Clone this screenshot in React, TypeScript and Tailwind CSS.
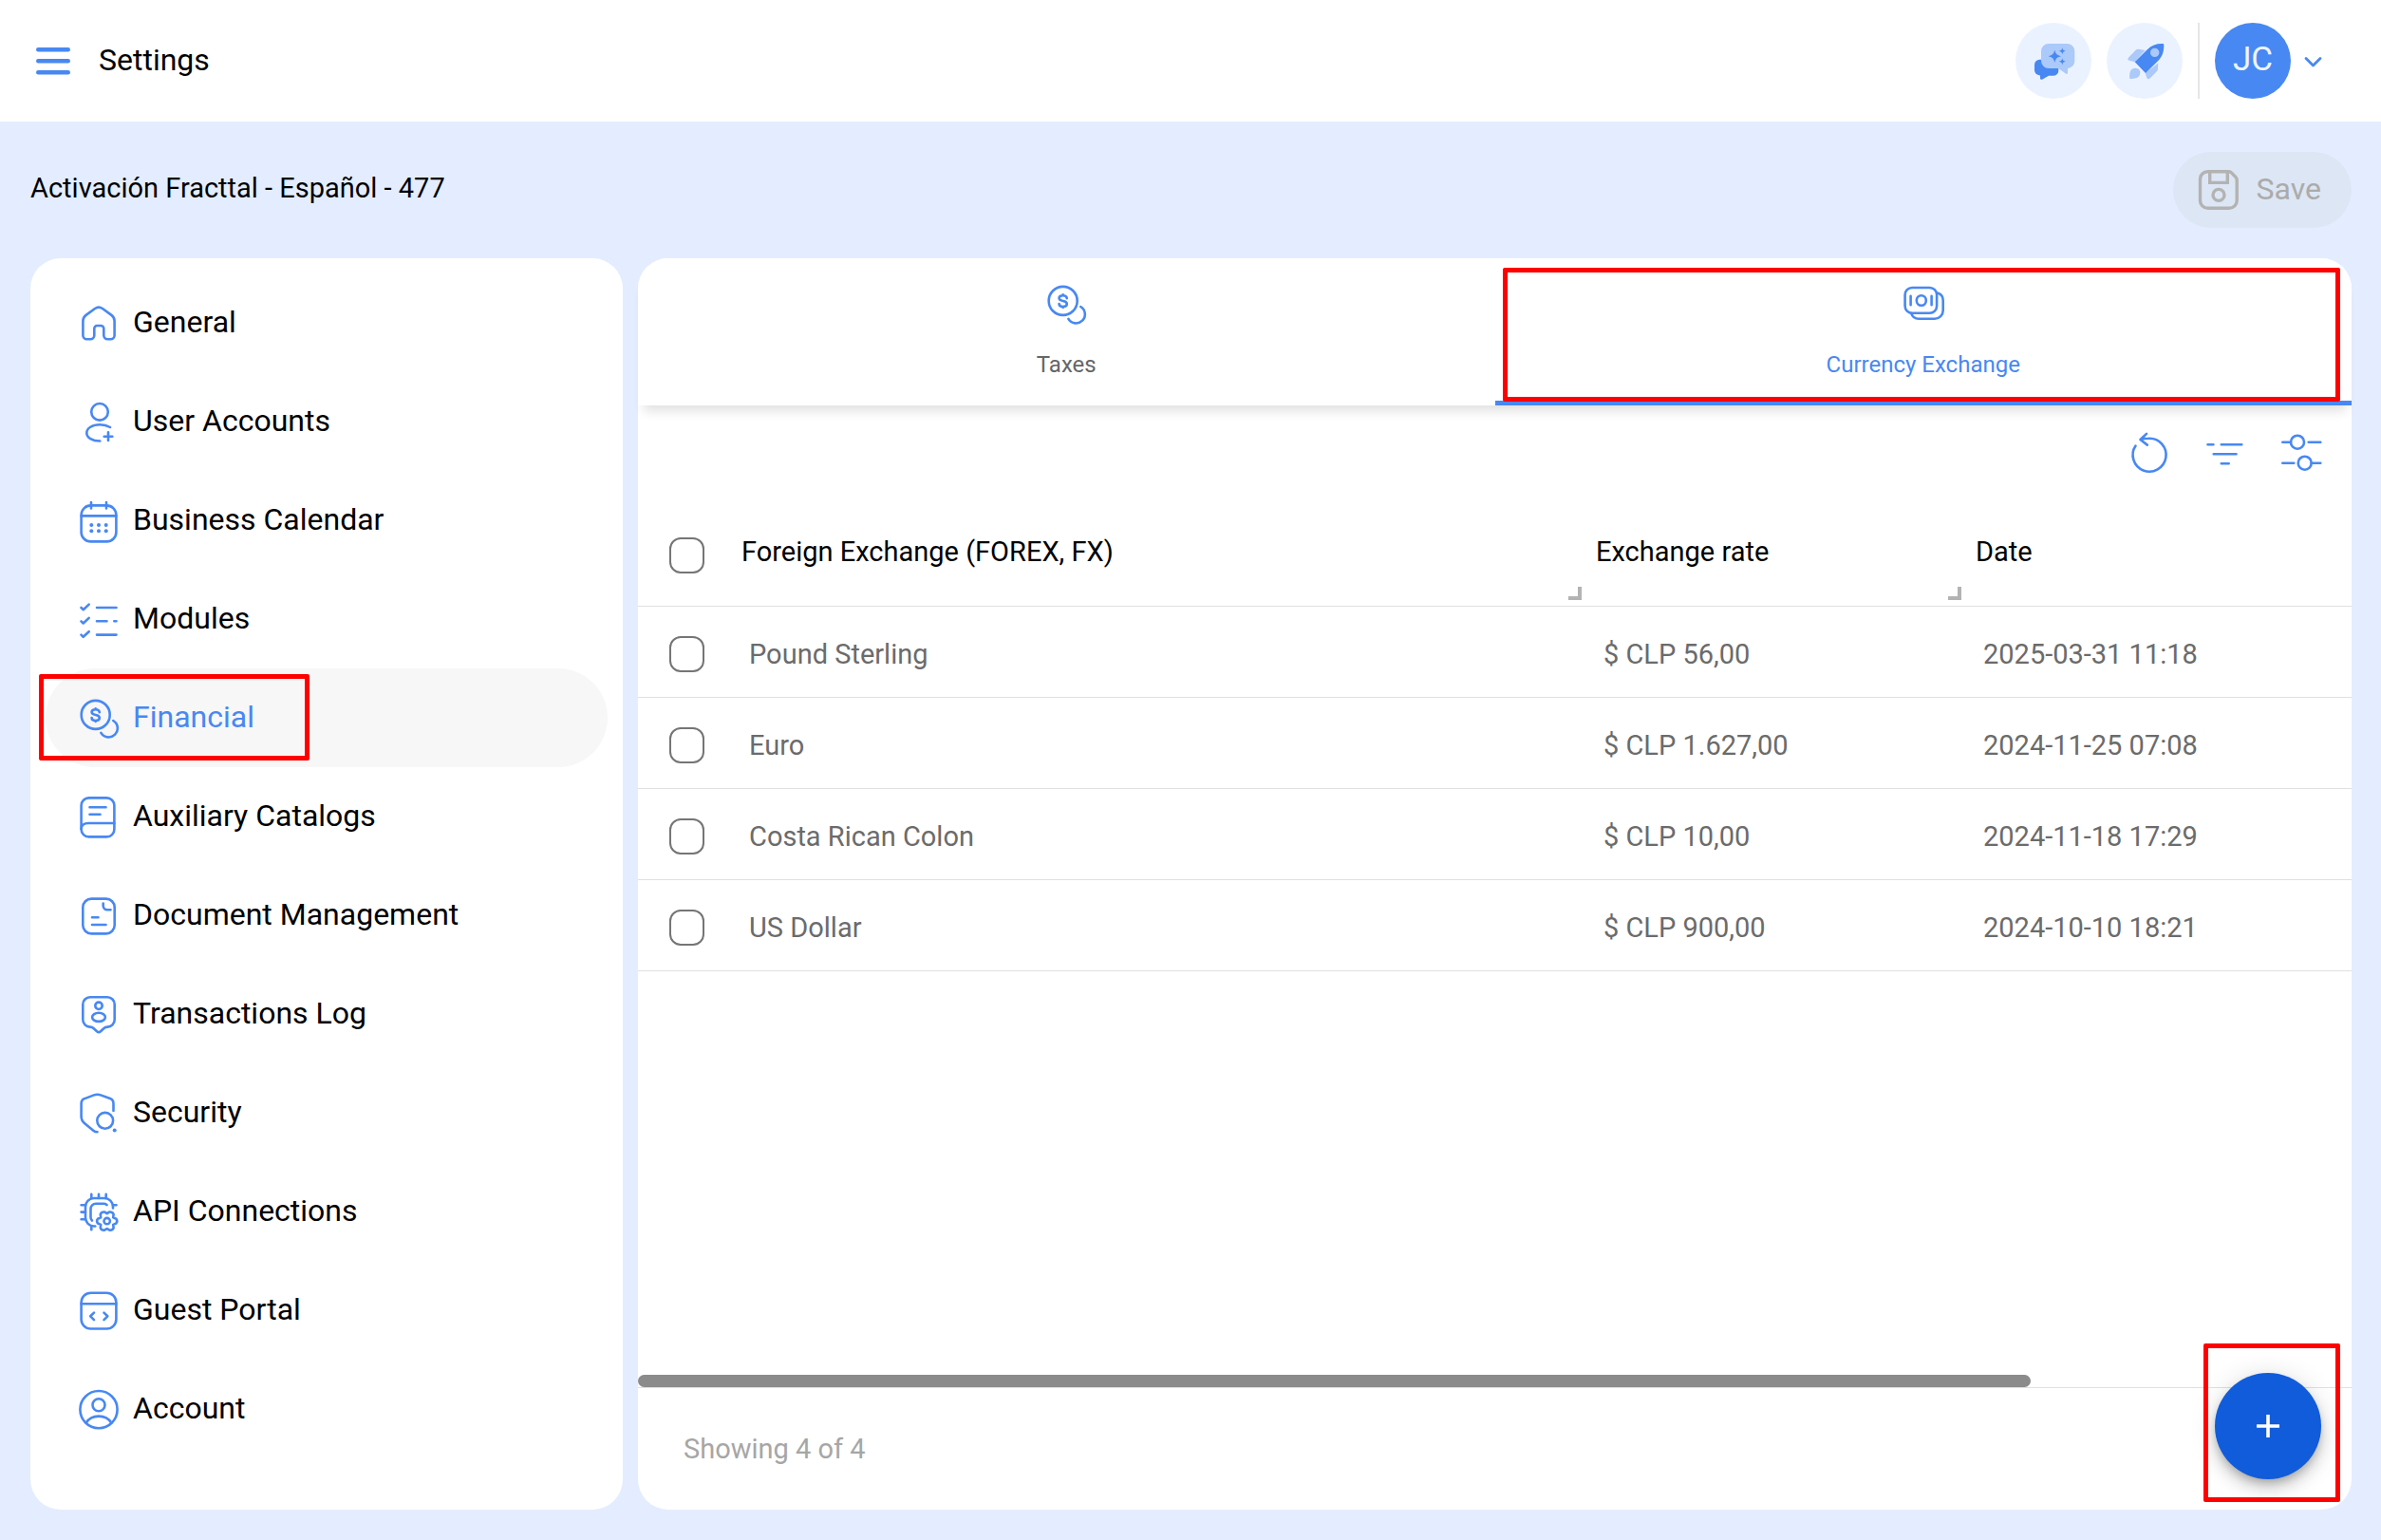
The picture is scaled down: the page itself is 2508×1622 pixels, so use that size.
import type { ReactNode } from "react";

type IconProps = { children: ReactNode; className?: string; width?: number };

function Icon({ children, className = "text-[#4888f2]", width = 2.6 }: IconProps) {
  return (
    <svg
      viewBox="0 0 48 48"
      fill="none"
      stroke="currentColor"
      strokeWidth={width}
      strokeLinecap="round"
      strokeLinejoin="round"
      aria-hidden="true"
      className={`size-12 shrink-0 ${className}`}
    >
      {children}
    </svg>
  );
}

const coins = (
  <Icon>
    <circle cx="20.7" cy="20.9" r="15" />
    <path d="M39.3 27A9.4 9.4 0 1 1 26.4 39.9" />
    <path d="M24.8 18.2c0-2-1.7-3-4.1-3s-4.1 1-4.1 2.900 1.700 2.500 4.100 2.900 4.100 1.100 4.100 3-1.700 3-4.100 3-4.100-1-4.100-3M20.700 14.200v1M20.700 27v1" />
  </Icon>
);

const menuItems = [
  {
    label: "General",
    icon: (
      <Icon>
        <path d="M7.4 22c0-3 1-4.5 3.2-6.1L20 9c2.6-1.8 5.4-1.8 8 0l9.4 6.900c2.200 1.600 3.200 3.100 3.200 6.100v15.300a4 4 0 0 1-4 4h-3.300a4 4 0 0 1-4-4V30a3 3 0 0 0-3-3h-4a3 3 0 0 0-3 3v7.300a4 4 0 0 1-4 4h-3.900a4 4 0 0 1-4-4z" />
      </Icon>
    ),
  },
  {
    label: "User Accounts",
    icon: (
      <Icon>
        <circle cx="25" cy="13.8" r="8.8" />
        <path d="M36 30c-3-1.800-6.500-2.800-10.700-2.800-8.100 0-14 3.800-14 8.800s5.900 8.500 14 8.500M34 35.400v8.600M29.700 39.700h8.600" />
      </Icon>
    ),
  },
  {
    label: "Business Calendar",
    icon: (
      <Icon>
        <rect x="5.6" y="8.4" width="36.8" height="38" rx="10" />
        <path d="M5.600 19.400h36.800M16 5v6.500M32 5v6.500" />
        <g fill="currentColor" stroke="none">
          <circle cx="16.3" cy="29" r="2" />
          <circle cx="24" cy="29" r="2" />
          <circle cx="31.7" cy="29" r="2" />
          <circle cx="16.3" cy="35.3" r="2" />
          <circle cx="24" cy="35.3" r="2" />
          <circle cx="31.7" cy="35.3" r="2" />
        </g>
      </Icon>
    ),
  },
  {
    label: "Modules",
    icon: (
      <Icon>
        <path d="M5.500 12l2.200 2.200 6-5.600M5.500 26.300l2.200 2.200 6-5.600M5.500 40.600l2.200 2.200 6-5.600" />
        <path d="M22 12h20.500M22 26.300h10.500M40.300 26.300h2.200M22 40.600h20.500" />
      </Icon>
    ),
  },
  { label: "Financial", icon: coins, active: true },
  {
    label: "Auxiliary Catalogs",
    icon: (
      <Icon>
        <rect x="5.6" y="4.4" width="34.8" height="41" rx="8" />
        <path d="M14.500 14.300h17M14.500 21.700h11M40.400 31H13c-4.500 0-7.400 2-7.400 6" />
      </Icon>
    ),
  },
  {
    label: "Document Management",
    icon: (
      <Icon>
        <rect x="7.3" y="6.6" width="33.4" height="36.8" rx="9" />
        <path d="M28.700 11.500V14a4.300 4.300 0 0 0 4.300 4.300h3.500M17 26.300h6.500M17 34h14.500" />
      </Icon>
    ),
  },
  {
    label: "Transactions Log",
    icon: (
      <Icon>
        <path d="M14.800 6.300h18.400a7.500 7.500 0 0 1 7.500 7.500v16.300a7.500 7.500 0 0 1-7.500 7.500c-1.700 0-2.700.4-3.700 1.400L26 42.300c-1.200 1.100-2.800 1.100-4 0L18.500 39c-1-1-2-1.400-3.700-1.400a7.500 7.500 0 0 1-7.500-7.500V13.800a7.500 7.500 0 0 1 7.500-7.500z" />
        <circle cx="24" cy="15.3" r="3.7" />
        <ellipse cx="24" cy="27.3" rx="6.9" ry="4.6" />
      </Icon>
    ),
  },
  {
    label: "Security",
    icon: (
      <Icon>
        <path d="M39.500 22v-7.500c0-3.300-.9-4.500-3.500-5.400L26 5.400c-2.400-.9-4.600-.9-7 0L9.200 9.100c-2.600.9-3.600 2.300-3.600 5.400V28c0 3.500 1.200 5.300 3.900 7.500l8.500 6.900c1.500 1.300 3 1.900 4.500 1.900" />
        <circle cx="30.7" cy="32.3" r="8.4" />
        <circle cx="40.7" cy="42.4" r="2" fill="currentColor" stroke="none" />
      </Icon>
    ),
  },
  {
    label: "API Connections",
    icon: (
      <Icon>
        <path d="M20.300 39.500H19a9 9 0 0 1-9-9V19a9 9 0 0 1 9-9h11a9 9 0 0 1 9 9v1.400" />
        <path d="M32.500 17c-1-.8-2-1.200-3.500-1.200h-8a5.500 5.500 0 0 0-5.500 5.500V30c0 1.500.5 2.600 1.400 3.500" />
        <path d="M16.300 5.800V10M24 5.800V10M31.700 5.800V10M5.600 17.200H10M5.600 24.600H10M5.600 32.200H10M39 17.200h3.500M16.300 39.500v3.800" />
        <g transform="translate(32.7 34.1)">
          <path d="M9.700-2.400Q11.500 0 9.700 2.400L6.500 3.750 6.950 7.190Q5.750 9.960 2.760 9.610L0 8-2.760 9.610Q-5.750 9.960-6.950 7.190L-6.500 3.750-9.700 2.400Q-11.500 0-9.700-2.400L-6.500-3.750-6.950-7.190Q-5.750-9.960-2.760-9.610L0-8 2.760-9.610Q5.750-9.960 6.950-7.190L6.500-3.750z" />
          <circle r="3.2" />
        </g>
      </Icon>
    ),
  },
  {
    label: "Guest Portal",
    icon: (
      <Icon>
        <rect x="5.6" y="5.7" width="36.8" height="37.8" rx="10" />
        <path d="M5.600 17.300h36.800M19 26.600l-3.800 3.700 3.800 3.800M29.500 26.600l3.800 3.700-3.800 3.800" />
      </Icon>
    ),
  },
  {
    label: "Account",
    icon: (
      <Icon>
        <circle cx="24" cy="24.6" r="19.6" />
        <circle cx="24" cy="19.8" r="6.5" />
        <path d="M10.800 38.600c2.700-4.600 7.700-7 13.200-7s10.500 2.400 13.200 7" />
      </Icon>
    ),
  },
];

const rates = [
  { name: "Pound Sterling", rate: "$ CLP 56,00", date: "2025-03-31 11:18" },
  { name: "Euro", rate: "$ CLP 1.627,00", date: "2024-11-25 07:08" },
  { name: "Costa Rican Colon", rate: "$ CLP 10,00", date: "2024-11-18 17:29" },
  { name: "US Dollar", rate: "$ CLP 900,00", date: "2024-10-10 18:21" },
];

function Checkbox({ label }: { label: string }) {
  return (
    <input
      type="checkbox"
      aria-label={label}
      className="block h-[38px] w-[37px] appearance-none rounded-xl border-2 border-[#757575] bg-white checked:bg-[#4888f2]"
    />
  );
}

// Red outline that points at the element it sits on
function Highlight({ className }: { className: string }) {
  return (
    <div className={`pointer-events-none absolute z-20 rounded-xs border-[5px] border-[#ff0000] ${className}`} />
  );
}

function ResizeHandle() {
  return <span className="absolute right-[7px] bottom-1.5 size-3.5 border-r-4 border-b-4 border-[#b3b3b3]" />;
}

function Header() {
  return (
    <header className="flex h-32 items-center justify-between bg-white pr-[59px] pl-8">
      <div className="flex items-center gap-6">
        <button type="button" aria-label="Menu">
          <Icon width={4.6}>
            <path d="M8.300 12.300h31.400M8.300 24.300h31.400M8.300 36.300h31.400" />
          </Icon>
        </button>
        <h1 className="pb-0.5 text-[32px] leading-10">Settings</h1>
      </div>

      <div className="flex items-center gap-4">
        <button
          type="button"
          aria-label="Assistant"
          className="flex size-20 items-center justify-center rounded-full bg-[#ebf2ff]"
        >
          <svg viewBox="0 0 48 48" className="size-12" aria-hidden="true">
            <path
              fill="#4888f2"
              d="M9.500 22.700h14a5.800 5.800 0 0 1 5.800 5.800v6a5.500 5.500 0 0 1-5.500 5.300H19l-6.500 3.700c-1.500.7-2.500.2-2.500-1.200v-2.700c-3.700-.4-6-2.600-6-6v-5.400a5.500 5.500 0 0 1 5.500-5.500z"
            />
            <path
              fill="#abc9f9"
              d="M19 6h19.300a8 8 0 0 1 8 8v10c0 4.400-2.900 7.400-7.300 8v4.500c0 1.300-.9 1.800-2.200 1.100L29.300 32H19a8 8 0 0 1-8-8V14a8 8 0 0 1 8-8z"
            />
            <path
              fill="#4888f2"
              d="M25.300 12.600c1 4.300 2.400 5.700 6.700 6.700-4.300 1-5.700 2.400-6.700 6.700-1-4.300-2.400-5.700-6.700-6.700 4.300-1 5.700-2.400 6.700-6.700zM33.300 10.200c.5 2.300 1.200 3 3.500 3.500-2.300.5-3 1.200-3.500 3.500-.5-2.300-1.200-3-3.500-3.500 2.300-.5 3-1.200 3.500-3.500zM33.300 21.200c.5 2.300 1.200 3 3.500 3.500-2.300.5-3 1.200-3.500 3.500-.5-2.300-1.200-3-3.500-3.500 2.300-.5 3-1.200 3.500-3.500z"
            />
          </svg>
        </button>
        <button
          type="button"
          aria-label="Getting started"
          className="flex size-20 items-center justify-center rounded-full bg-[#ebf2ff]"
        >
          <svg viewBox="0 0 48 48" className="size-12" aria-hidden="true">
            <path
              fill="#abc9f9"
              d="M24.500 13l-7-1.300c-1.200-.2-2 .2-2.800 1L7 20.700c-1.200 1.300-.8 2.600.8 3l5.900 1.600zM38.200 26.500l-.2 5.800c0 1.300-.3 2-1.200 2.900l-7.500 7.500c-1.100 1-2.500.8-2.900-.5L24.700 37zM8.200 42.200c-.3-6.400 1.300-10.400 6-10.400 4 0 6.200 3.300 4.700 6.900-1.500 3.700-5.300 4-9.700 4.300-.6 0-1-.2-1-.8z"
            />
            <path
              fill="#4888f2"
              d="M13.700 25.300L27 12c4.500-4.500 10-6.300 16-6 .9 0 1.300.4 1.300 1.300.2 6-1.300 11.800-5.300 15.900L25 37z"
            />
            <circle cx="34.7" cy="15.4" r="4.7" fill="#abc9f9" />
          </svg>
        </button>
        <div className="h-20 w-0.5 bg-[#e6e6e6]" />
        <button type="button" aria-label="User menu" className="flex items-center gap-3">
          <span className="flex size-20 items-center justify-center rounded-full bg-[#4888f2] pb-0.5 text-[35px] leading-10 text-[#eef4ff]">
            JC
          </span>
          <svg
            viewBox="0 0 24 24"
            fill="none"
            stroke="#4888f2"
            strokeWidth="2.8"
            strokeLinecap="round"
            strokeLinejoin="round"
            className="size-6"
            aria-hidden="true"
          >
            <path d="M4 9.500l7.500 7.500 7.500-7.500" />
          </svg>
        </button>
      </div>
    </header>
  );
}

function Sidebar() {
  return (
    <nav className="w-[624px] shrink-0 rounded-[32px] bg-white p-4">
      <ul>
        {menuItems.map((item) => (
          <li key={item.label} className="relative">
            <a
              href="#"
              className={
                item.active
                  ? "flex h-26 items-center gap-3 rounded-full bg-[#f7f7f7] px-8 text-[#4888f2]"
                  : "flex h-26 items-center gap-3 rounded-full px-8"
              }
            >
              {item.icon}
              <span className="pb-0.5 text-[32px] leading-10">{item.label}</span>
            </a>
            {item.active && <Highlight className="top-1.5 -left-[7px] h-[91px] w-[285px]" />}
          </li>
        ))}
      </ul>
    </nav>
  );
}

function Tabs() {
  return (
    <div
      role="tablist"
      className="relative z-10 grid grid-cols-2 rounded-t-[32px] bg-white shadow-[0_12px_12px_-6px_rgba(0,0,0,0.12)]"
    >
      <button
        type="button"
        role="tab"
        aria-selected="false"
        className="flex h-[155px] flex-col items-center gap-6 pt-6 text-[#666666]"
      >
        {coins}
        <span className="text-2xl">Taxes</span>
      </button>
      <button
        type="button"
        role="tab"
        aria-selected="true"
        className="relative flex h-[155px] flex-col items-center gap-6 border-b-[5px] border-[#4888f2] pt-6 text-[#4888f2]"
      >
        <Icon>
          <rect x="4.6" y="7" width="33.5" height="26.8" rx="7.5" />
          <path d="M38.600 12.600c3.800 1 6.100 3.900 6.100 8V31a8.700 8.700 0 0 1-8.700 8.700H19c-4 0-6.600-2-7.800-5.600" />
          <ellipse cx="21.800" cy="20.500" rx="5" ry="5.300" />
          <path d="M10.600 15.800v9.400M32.600 15.800v9.400" />
        </Icon>
        <span className="text-2xl">Currency Exchange</span>
        <Highlight className="top-2.5 right-3 -bottom-px left-2" />
      </button>
    </div>
  );
}

function Toolbar() {
  return (
    <div className="flex h-[100px] items-center justify-end gap-8 pr-[29px]">
      <button type="button" aria-label="Refresh">
        <Icon>
          <path d="M9.500 16.500A17.500 17.500 0 1 0 23.300 8.700c-3.300 0-6.300.4-8.600 1.300M21 3.900L14.500 10l7.300 5.600" />
        </Icon>
      </button>
      <button type="button" aria-label="Filter">
        <Icon>
          <path d="M5.500 15.300h5.900M19.800 15.300h21.500M11.700 25.300h23.800M19.800 35.300h7.900" />
        </Icon>
      </button>
      <button type="button" aria-label="Columns">
        <Icon>
          <circle cx="20" cy="12.7" r="7" />
          <circle cx="27.7" cy="34.7" r="7" />
          <path d="M4.300 12.700H13M31.700 12.700h12.600M4.300 34.700h12M34.700 34.700h9.600" />
        </Icon>
      </button>
    </div>
  );
}

function RatesTable() {
  return (
    <table className="w-full table-fixed border-separate border-spacing-0 text-left text-[29px] leading-10">
      <thead>
        <tr className="[&>th]:h-28 [&>th]:border-b [&>th]:border-[#e0e0e0] [&>th]:font-normal">
          <th className="w-[101px] pt-1 pl-[33px]">
            <Checkbox label="Select all" />
          </th>
          <th className="relative px-2 pb-1">
            Foreign Exchange (FOREX, FX)
            <ResizeHandle />
          </th>
          <th className="relative w-[400px] px-2 pb-1">
            Exchange rate
            <ResizeHandle />
          </th>
          <th className="w-[404px] px-2 pb-1">Date</th>
        </tr>
      </thead>
      <tbody className="text-[#6b6b6b]">
        {rates.map((row) => (
          <tr key={row.name} className="[&>td]:h-24 [&>td]:border-b [&>td]:border-[#e0e0e0] [&>td]:pt-1">
            <td className="pl-[33px]">
              <Checkbox label={`Select ${row.name}`} />
            </td>
            <td className="px-4">{row.name}</td>
            <td className="px-4">{row.rate}</td>
            <td className="px-4">{row.date}</td>
          </tr>
        ))}
      </tbody>
    </table>
  );
}

export default function App() {
  return (
    <div className="flex min-h-screen flex-col bg-[#e4edff] font-['Roboto',sans-serif] text-black">
      <Header />

      <div className="flex flex-1 flex-col gap-8 py-8 pr-[31px] pl-8">
        <div className="flex h-20 items-center justify-between">
          <h2 className="pb-1 text-[29px] leading-10">Activación Fracttal - Español - 477</h2>
          <button
            type="button"
            disabled
            className="flex h-20 items-center gap-4 rounded-full bg-[#dde6f4] pr-8 pl-6 text-[#ababab]"
          >
            <Icon width={3.4} className="text-[#b3b3b3]">
              <path d="M12.500 4.700h22c1.400 0 2.300.4 3.200 1.400l4.300 4.500c.8.900 1.200 1.800 1.200 3v21.600a8 8 0 0 1-8 8H12.500a8 8 0 0 1-8-8V12.700a8 8 0 0 1 8-8z" />
              <path d="M14.700 4.700v11.700h18.600V4.700" strokeLinejoin="miter" />
              <circle cx="24" cy="29.4" r="6" />
            </Icon>
            <span className="pb-0.5 text-[32px] leading-10">Save</span>
          </button>
        </div>

        <div className="flex flex-1 gap-4">
          <Sidebar />

          <main className="relative flex min-w-0 flex-1 flex-col rounded-[32px] bg-white">
            <Tabs />
            <Toolbar />
            <RatesTable />

            {/* Horizontal scroll track */}
            <div className="mt-auto">
              <div className="h-[13px] w-[81.3%] rounded-full bg-[#8b8b8b]" />
            </div>
            <footer className="flex h-[129px] items-center border-t border-[#e0e0e0] px-12 text-[29px] leading-10 text-[#a6a6a6]">
              Showing 4 of 4
            </footer>

            <button
              type="button"
              aria-label="Add"
              className="absolute right-8 bottom-8 z-10 flex size-28 items-center justify-center rounded-full bg-[#105cdb] text-white shadow-[0_5px_8px_-2px_rgba(0,0,0,0.2),0_10px_16px_0_rgba(0,0,0,0.14),0_2px_29px_0_rgba(0,0,0,0.12)]"
            >
              <svg viewBox="0 0 24 24" stroke="currentColor" strokeWidth="3.6" className="size-6" aria-hidden="true">
                <path d="M12 0v24M0 12h24" />
              </svg>
            </button>
            <Highlight className="right-3 bottom-2 h-[167px] w-36" />
          </main>
        </div>
      </div>
    </div>
  );
}
